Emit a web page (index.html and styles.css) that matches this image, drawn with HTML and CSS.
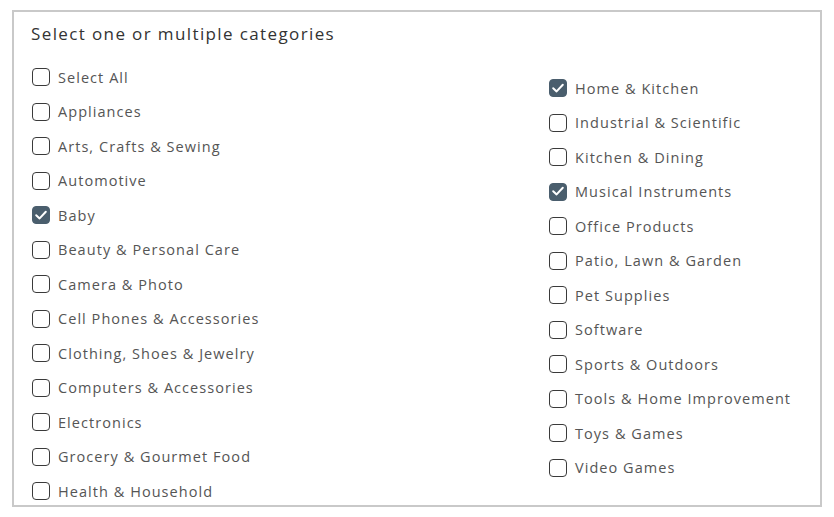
FILE: index.html
```html
<!DOCTYPE html>
<html>
<head>
<meta charset="utf-8">
<link rel="stylesheet" href="styles.css">
</head>
<body>
<div class="card">
  <div class="title">Select one or multiple categories</div>
  <div class="grid">
    <div class="col">
      <label class="item"><span class="box"></span><span class="text">Select All</span></label>
      <label class="item"><span class="box"></span><span class="text">Appliances</span></label>
      <label class="item"><span class="box"></span><span class="text">Arts, Crafts &amp; Sewing</span></label>
      <label class="item"><span class="box"></span><span class="text">Automotive</span></label>
      <label class="item"><span class="box checked"><svg viewBox="0 0 18 18"><path d="M4.2 9.2 L7.6 12.4 L13.8 5.8"/></svg></span><span class="text">Baby</span></label>
      <label class="item"><span class="box"></span><span class="text">Beauty &amp; Personal Care</span></label>
      <label class="item"><span class="box"></span><span class="text">Camera &amp; Photo</span></label>
      <label class="item"><span class="box"></span><span class="text">Cell Phones &amp; Accessories</span></label>
      <label class="item"><span class="box"></span><span class="text">Clothing, Shoes &amp; Jewelry</span></label>
      <label class="item"><span class="box"></span><span class="text">Computers &amp; Accessories</span></label>
      <label class="item"><span class="box"></span><span class="text">Electronics</span></label>
      <label class="item"><span class="box"></span><span class="text">Grocery &amp; Gourmet Food</span></label>
      <label class="item"><span class="box"></span><span class="text">Health &amp; Household</span></label>
    </div>
    <div class="col right">
      <label class="item"><span class="box checked"><svg viewBox="0 0 18 18"><path d="M4.2 9.2 L7.6 12.4 L13.8 5.8"/></svg></span><span class="text">Home &amp; Kitchen</span></label>
      <label class="item"><span class="box"></span><span class="text">Industrial &amp; Scientific</span></label>
      <label class="item"><span class="box"></span><span class="text">Kitchen &amp; Dining</span></label>
      <label class="item"><span class="box checked"><svg viewBox="0 0 18 18"><path d="M4.2 9.2 L7.6 12.4 L13.8 5.8"/></svg></span><span class="text">Musical Instruments</span></label>
      <label class="item"><span class="box"></span><span class="text">Office Products</span></label>
      <label class="item"><span class="box"></span><span class="text">Patio, Lawn &amp; Garden</span></label>
      <label class="item"><span class="box"></span><span class="text">Pet Supplies</span></label>
      <label class="item"><span class="box"></span><span class="text">Software</span></label>
      <label class="item"><span class="box"></span><span class="text">Sports &amp; Outdoors</span></label>
      <label class="item"><span class="box"></span><span class="text">Tools &amp; Home Improvement</span></label>
      <label class="item"><span class="box"></span><span class="text">Toys &amp; Games</span></label>
      <label class="item"><span class="box"></span><span class="text">Video Games</span></label>
    </div>
  </div>
</div>
</body>
</html>
```
FILE: styles.css
```css
html, body {
  margin: 0;
  padding: 0;
  background: #ffffff;
}
body {
  font-family: "Open Sans", "Liberation Sans", sans-serif;
  padding: 10px 12px;
}
.card {
  box-sizing: border-box;
  width: 810px;
  height: 497px;
  border: 2px solid #c9c9c9;
  overflow: hidden;
  padding: 10px 0 0 17px;
}
.title {
  font-size: 17px;
  line-height: 24px;
  color: #333333;
  letter-spacing: 1.38px;
}
.grid {
  display: grid;
  grid-template-columns: 517px 1fr;
  margin-top: 14px;
}
.col {
  display: flex;
  flex-direction: column;
}
.right {
  padding-top: 11px;
}
.item {
  display: flex;
  align-items: center;
  height: 34.5px;
  padding-left: 1px;
}
.box {
  box-sizing: border-box;
  width: 18px;
  height: 18px;
  border: 1.5px solid #3a3a3a;
  border-radius: 4px;
  flex: none;
  display: flex;
}
.box.checked {
  background: #4a5e6d;
  border-color: #4a5e6d;
}
.box svg {
  width: 18px;
  height: 18px;
  margin: -1.5px;
  fill: none;
  stroke: #ffffff;
  stroke-width: 2;
  stroke-linecap: round;
  stroke-linejoin: round;
}
.text {
  margin-left: 8px;
  font-size: 14.5px;
  color: #555555;
  letter-spacing: 1.05px;
}
```
